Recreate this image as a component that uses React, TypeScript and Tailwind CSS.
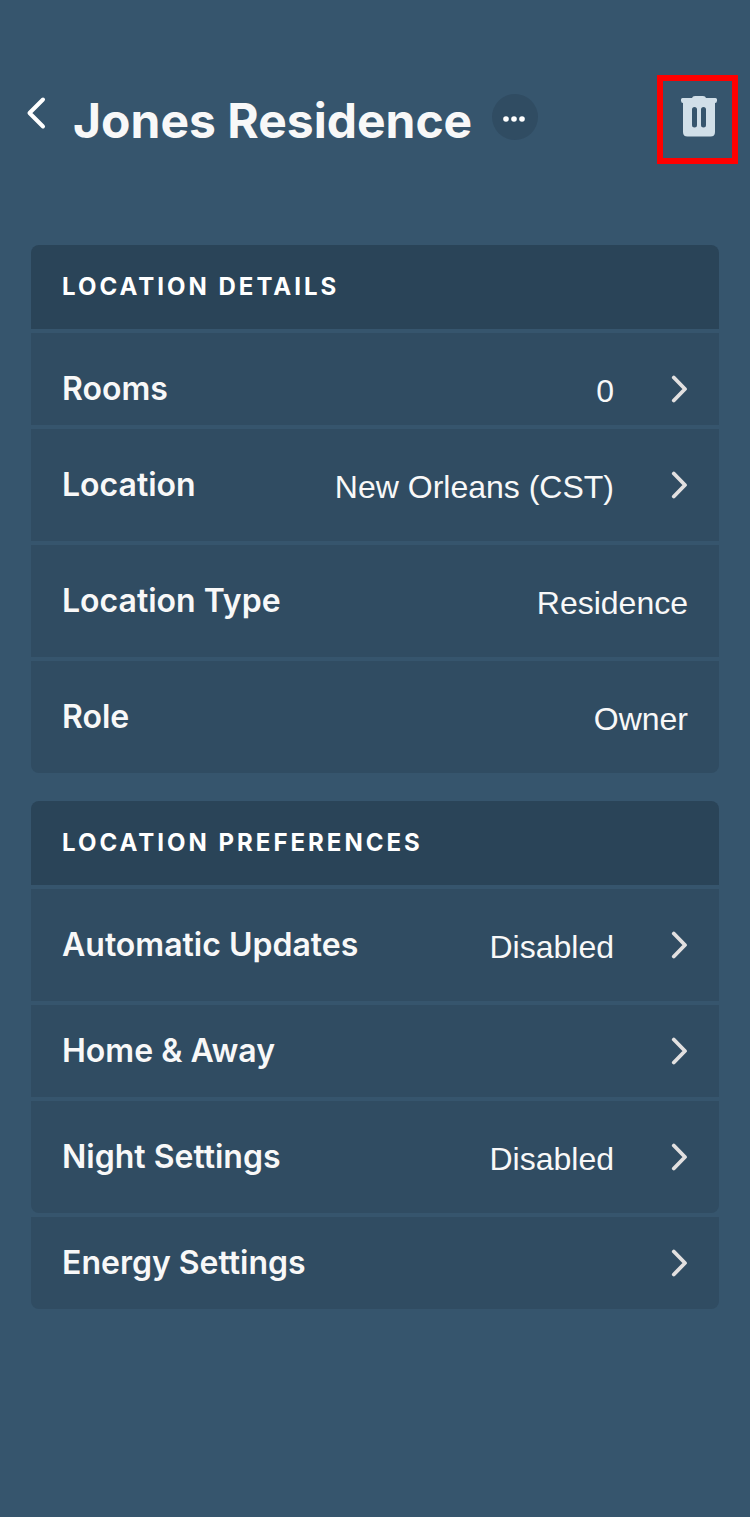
import clsx from 'clsx';

interface Row {
  label: string;
  value?: string;
  link?: boolean;
  size: 'short' | 'tall' | 'cut';
  rounded?: boolean;
}

interface SectionProps {
  title: string;
  rows: Row[];
}

const details: Row[] = [
  { label: 'Rooms', value: '0', link: true, size: 'cut' },
  { label: 'Location', value: 'New Orleans (CST)', link: true, size: 'tall' },
  { label: 'Location Type', value: 'Residence', size: 'tall' },
  { label: 'Role', value: 'Owner', size: 'tall', rounded: true },
];

const preferences: Row[] = [
  { label: 'Automatic Updates', value: 'Disabled', link: true, size: 'tall' },
  { label: 'Home & Away', link: true, size: 'short' },
  { label: 'Night Settings', value: 'Disabled', link: true, size: 'tall', rounded: true },
  { label: 'Energy Settings', link: true, size: 'short', rounded: true },
];

function ChevronRight() {
  return (
    <svg viewBox="0 0 18 28" className="h-7 w-[18px] shrink-0" fill="none" aria-hidden="true">
      <path d="M3.800 2.500 15 14 3.800 25.500" stroke="#e2e0e0" strokeWidth="3.8" strokeLinecap="round" strokeLinejoin="round" />
    </svg>
  );
}

function SettingsRow({ label, value, link, size, rounded }: Row) {
  const className = clsx(
    'flex w-full items-center justify-between bg-[#304c62] px-[31px] text-left',
    size === 'short' && 'h-[92px]',
    size === 'tall' && 'h-[112px]',
    size === 'cut' && 'h-[92px] pt-5',
    rounded && 'rounded-b-lg',
  );

  const content = (
    <>
      <span className="text-[32px] leading-10 font-semibold text-[#f8f8f8]">{label}</span>
      <span className="flex items-center gap-14">
        {value && (
          <span className="pt-1 font-['Liberation_Sans',Arial,sans-serif] text-[32px] leading-10 text-[#f8f8f8]">
            {value}
          </span>
        )}
        {link && <ChevronRight />}
      </span>
    </>
  );

  return link ? (
    <button type="button" className={className}>
      {content}
    </button>
  ) : (
    <div className={className}>{content}</div>
  );
}

function Section({ title, rows }: SectionProps) {
  return (
    <section className="flex flex-col gap-1">
      <h2 className="flex h-[84px] items-center rounded-t-lg bg-[#2a4458] px-[31px] text-[24px] leading-8 font-bold tracking-[3px] text-white uppercase">
        {title}
      </h2>
      {rows.map((row) => (
        <SettingsRow key={row.label} {...row} />
      ))}
    </section>
  );
}

export default function App() {
  return (
    <div className="min-h-screen bg-[#36556d] pb-16 font-['Inter',sans-serif]">
      <header className="flex items-start pt-[75px] pr-3 pl-6">
        <button type="button" aria-label="Back" className="mt-5 flex h-9 w-6 items-center justify-center">
          <svg viewBox="0 0 24 36" className="h-9 w-6" fill="none">
            <path d="M19 4.500 5.500 18 19 31.500" stroke="#fff" strokeWidth="4" strokeLinecap="round" strokeLinejoin="round" />
          </svg>
        </button>
        <h1 className="mt-4 ml-[25px] text-[48px] leading-[60px] font-bold whitespace-nowrap text-[#f8f8f8]">
          Jones Residence
        </h1>
        <button type="button" aria-label="More options" className="mt-[19px] ml-5 size-[46px] rounded-full bg-[#304c62]">
          <svg viewBox="0 0 46 46" className="size-full" fill="#fff">
            <circle cx="14" cy="25" r="2.8" />
            <circle cx="22" cy="25" r="2.8" />
            <circle cx="30" cy="25" r="2.8" />
          </svg>
        </button>
        <button
          type="button"
          aria-label="Delete location"
          className="ml-auto flex h-[89px] w-[81px] items-start justify-center border-6 border-[#ff0000] pt-[14px] pl-0.5"
        >
          <svg viewBox="0 0 38 42" className="h-[42px] w-[38px]">
            <path
              fill="#d1dfe8"
              fillRule="evenodd"
              d="M15 1H23Q25.500 1 26 3H35.500Q37 3 37 4.500V5.500Q37 8 35 8V37Q35 41.500 30.500 41.500H7.500Q3 41.500 3 37V8Q1 8 1 5.500V4.500Q1 3 2.500 3H12Q12.500 1 15 1ZM14.500 12A2.500 2.500 0 0 0 12 14.500V30A2.500 2.500 0 0 0 17 30V14.500A2.500 2.500 0 0 0 14.500 12ZM23.500 12A2.500 2.500 0 0 0 21 14.500V30A2.500 2.500 0 0 0 26 30V14.500A2.500 2.500 0 0 0 23.500 12Z"
            />
          </svg>
        </button>
      </header>

      <main className="flex flex-col gap-7 px-[31px] pt-[81px]">
        <Section title="Location Details" rows={details} />
        <Section title="Location Preferences" rows={preferences} />
      </main>
    </div>
  );
}
